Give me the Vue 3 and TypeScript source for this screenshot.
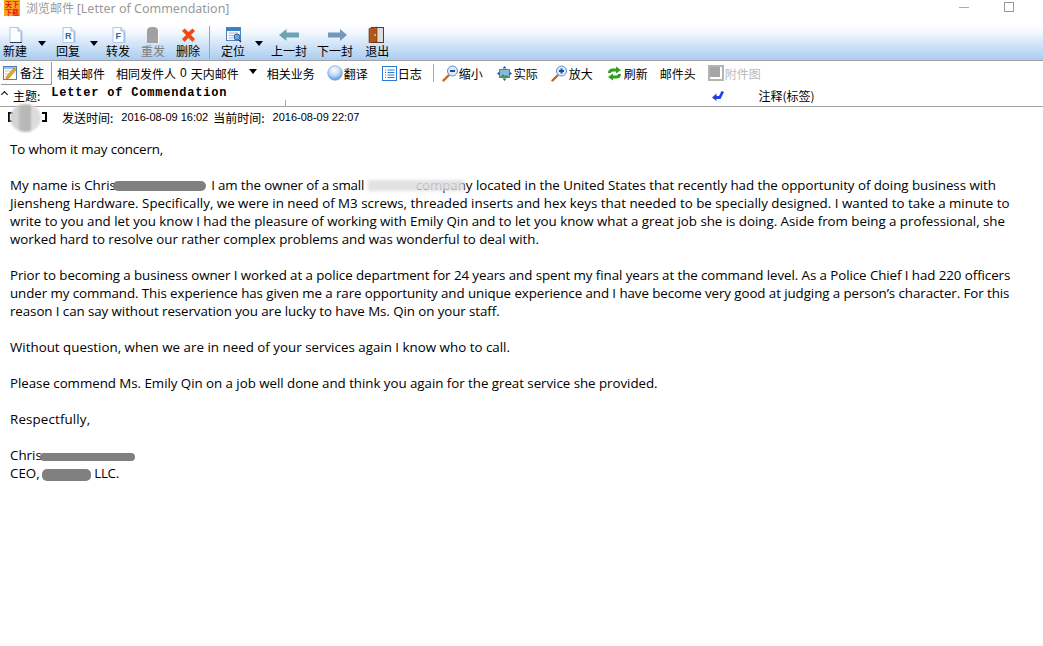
<script setup lang="ts">
// Mail viewer window: title bar, two toolbars, header rows and message body
interface TopItem { label?: string; icon?: string; ml: number; muted?: boolean }
interface Part { text?: string; smear?: number; haze?: number; cls?: string; ls?: number }

const topItems: TopItem[] = [
  { label: '新建', icon: 'new', ml: 3 },
  { icon: 'caret', ml: 11 },
  { label: '回复', icon: 'reply', ml: 10 },
  { icon: 'caret', ml: 10 },
  { label: '转发', icon: 'forward', ml: 8 },
  { label: '重发', icon: 'resend', ml: 11, muted: true },
  { label: '删除', icon: 'delete', ml: 11 },
  { icon: 'sep', ml: 9 },
  { label: '定位', icon: 'locate', ml: 11 },
  { icon: 'caret', ml: 10 },
  { label: '上一封', icon: 'prev', ml: 8 },
  { label: '下一封', icon: 'next', ml: 10 },
  { label: '退出', icon: 'exit', ml: 12 },
]

// ls: letter spacing per run, the source font is a little tighter or wider line by line
const lines: Part[][] = [
  [{ text: 'To whom it may concern,', ls: -0.13 }],
  [],
  [
    { text: 'My name is Chris' },
    { smear: 93, cls: 'smear-name' },
    { text: ' I am the owner of a small ', ls: -0.15 },
    { haze: 96 },
    { text: 'company located in the United States that recently had the opportunity of doing business with', ls: -0.04 },
  ],
  [{ text: 'Jiensheng Hardware. Specifically, we were in need of M3 screws, threaded inserts and hex keys that needed to be specially designed. I wanted to take a minute to', ls: 0.006 }],
  [{ text: 'write to you and let you know I had the pleasure of working with Emily Qin and to let you know what a great job she is doing. Aside from being a professional, she', ls: -0.025 }],
  [{ text: 'worked hard to resolve our rather complex problems and was wonderful to deal with.', ls: -0.03 }],
  [],
  [{ text: 'Prior to becoming a business owner I worked at a police department for 24 years and spent my final years at the command level. As a Police Chief I had 220 officers', ls: -0.073 }],
  [{ text: 'under my command. This experience has given me a rare opportunity and unique experience and I have become very good at judging a person’s character. For this', ls: -0.076 }],
  [{ text: 'reason I can say without reservation you are lucky to have Ms. Qin on your staff.', ls: -0.074 }],
  [],
  [{ text: 'Without question, when we are in need of your services again I know who to call.', ls: 0.012 }],
  [],
  [{ text: 'Please commend Ms. Emily Qin on a job well done and think you again for the great service she provided.', ls: -0.04 }],
  [],
  [{ text: 'Respectfully,', ls: 0.15 }],
  [],
  [{ text: 'Chris' }, { smear: 95, cls: 'smear-sign' }],
  [{ text: 'CEO, ' }, { smear: 49, cls: 'smear-ceo' }, { text: ' LLC.', ls: -0.3 }],
]
</script>

<template>
  <div class="window">
    <header class="titlebar">
      <span class="app-logo">
        <i>天下</i><i>下载</i>
      </span>
      <span class="title">浏览邮件 <span class="title-latin">[Letter of Commendation]</span></span>
      <span class="win-min"></span>
      <span class="win-max"></span>
    </header>

    <nav class="toolbar">
      <template v-for="(item, i) in topItems" :key="i">
        <span v-if="item.icon === 'caret'" class="caret" :style="{ marginLeft: item.ml + 'px' }"></span>
        <span v-else-if="item.icon === 'sep'" class="top-sep" :style="{ marginLeft: item.ml + 'px' }"></span>
        <div v-else class="tool" :class="{ muted: item.muted }" :style="{ marginLeft: item.ml + 'px' }">
          <svg class="tool-icon" viewBox="0 0 24 17" width="24" height="17">
            <template v-if="item.icon === 'new' || item.icon === 'reply' || item.icon === 'forward'">
              <path d="M7 1.500h8l4 3.500v11.500H7z" fill="#fbfdff" stroke="#b4c8e2" />
              <path d="M15 1.500V5h4" fill="#e4edf8" stroke="#9db6d6" />
              <path d="M7 16h12v1H7z" fill="#27374d" v-if="item.icon === 'new'" />
              <path d="M17.500 6h1.500v10h-1.500z" fill="#9dbce6" />
              <text v-if="item.icon === 'reply'" x="9" y="13" class="doc-letter">R</text>
              <text v-if="item.icon === 'forward'" x="9.500" y="13" class="doc-letter">F</text>
            </template>
            <template v-else-if="item.icon === 'resend'">
              <path d="M7 17V5q0-4 5-4h1q5 0 5 4v12z" fill="#fff" />
              <path d="M6 17V5q0-4 5-4h1q5 0 5 4v12z" fill="#a0a0a0" />
            </template>
            <path v-else-if="item.icon === 'delete'" d="M6 5l2.500-2.500L12.500 6l4-3.500L19 5l-4 4 4 4-2.500 3-4-4-4 4L6 13l4-4z" fill="#f04a12" />
            <template v-else-if="item.icon === 'locate'">
              <rect x="5.500" y="1.500" width="14" height="13" fill="#f2f6fc" stroke="#4d82bd" />
              <rect x="6" y="2" width="13" height="3" fill="#3d7fc4" />
              <path d="M8 7h9M8 9.500h5M8 12h4" stroke="#b3b9c2" />
              <circle cx="16" cy="11" r="3" fill="#6aa6dc" stroke="#2f639b" />
              <path d="M18 14l2 2" stroke="#333" stroke-width="1.200" />
            </template>
            <path v-else-if="item.icon === 'prev'" d="M2 9l7.500-6v3.500H22v5H9.500V15z" fill="#6ba3b5" />
            <path v-else-if="item.icon === 'next'" d="M24 9l-7-6v3.500H5v5h12V15z" fill="#7298b8" />
            <template v-else-if="item.icon === 'exit'">
              <rect x="6.500" y="1.500" width="12" height="15" fill="#dcdcdc" stroke="#5d3a1c" />
              <path d="M4 2.500l8-1.500v15l-8 1z" fill="#b4561c" stroke="#5d2f10" stroke-width=".6" />
              <rect x="9.500" y="8" width="1.400" height="2" fill="#f0d060" />
            </template>
          </svg>
          <span class="tool-label">{{ item.label }}</span>
        </div>
      </template>
    </nav>

    <nav class="subbar">
      <div class="note-btn">
        <svg viewBox="0 0 16 16" width="16" height="16">
          <rect x="1.500" y="1.500" width="13" height="13" fill="#fffdf0" stroke="#4f7fb5" />
          <rect x="2" y="2" width="12" height="2" fill="#9cc0e8" />
          <path d="M3 6h7M3 9h4M3 12h2" stroke="#b9c9dc" />
          <path d="M4 14l1-3 7-8 2 2-7 8z" fill="#eba628" stroke="#9a6510" stroke-width=".5" />
        </svg>
        <span>备注</span>
      </div>
      <span class="sub sub-related">相关邮件</span>
      <span class="sub sub-same">相同发件人</span>
      <span class="sub sub-zero">0</span>
      <span class="sub sub-days">天内邮件</span>
      <span class="caret sub-caret"></span>
      <span class="sub sub-biz">相关业务</span>

      <svg class="sub-globe" viewBox="0 0 16 16" width="16" height="16">
        <defs>
          <radialGradient id="globe" cx="45%" cy="30%" r="72%">
            <stop offset="0" stop-color="#ffffff" />
            <stop offset=".5" stop-color="#c4dbf5" />
            <stop offset="1" stop-color="#4f93dc" />
          </radialGradient>
        </defs>
        <circle cx="8" cy="8" r="7.300" fill="url(#globe)" stroke="#7aa9dc" stroke-width=".7" />
      </svg>
      <span class="sub sub-t1">翻译</span>

      <svg class="sub-log" viewBox="0 0 15 15" width="15" height="15">
        <rect x=".5" y=".5" width="14" height="14" fill="#fff" stroke="#2a7bd8" />
        <path d="M3 4h1M5.500 4h7M3 6.500h1M5.500 6.500h7M3 9h1M5.500 9h7M3 11.500h1M5.500 11.500h7" stroke="#2a7bd8" />
      </svg>
      <span class="sub sub-t1">日志</span>

      <span class="sub-sep"></span>

      <svg class="sub-zoomout" viewBox="0 0 17 17" width="17" height="17">
        <path d="M1.500 15.500l5-5" stroke="#b5682a" stroke-width="2.400" stroke-linecap="round" />
        <circle cx="10.500" cy="6" r="5" fill="#dceafa" stroke="#5a8fc4" />
        <path d="M8 6h5" stroke="#1c4f9c" stroke-width="2" />
      </svg>
      <span class="sub sub-t0">缩小</span>

      <svg class="sub-actual" viewBox="0 0 15 15" width="15" height="15">
        <rect x="2.500" y="3.500" width="10" height="8" fill="#8ab8dc" stroke="#5a7fa0" />
        <path d="M3 11l3-3 2 2 2-1 2 2z" fill="#3f9a3a" />
        <path d="M7.500 0l2 2.500h-4zM7.500 15l2-2.500h-4zM0 7.500l2.500-2v4zM15 7.500l-2.500-2v4z" fill="#1f5fa8" />
      </svg>
      <span class="sub sub-t2">实际</span>

      <svg class="sub-zoomin" viewBox="0 0 17 17" width="17" height="17">
        <path d="M1.500 15.500l5-5" stroke="#b5682a" stroke-width="2.400" stroke-linecap="round" />
        <circle cx="10.500" cy="6" r="5" fill="#dceafa" stroke="#5a8fc4" />
        <path d="M8 6h5M10.500 3.500v5" stroke="#1c4f9c" stroke-width="2" />
      </svg>
      <span class="sub sub-t1">放大</span>

      <svg class="sub-refresh" viewBox="0 0 15 15" width="15" height="15">
        <path d="M1 7q0-4.500 5-4.500h3V.5l5 3.500-5 3.500V5.500H6q-2 0-2.200 1.500z" fill="#2f9e1f" />
        <path d="M14 8q0 4.500-5 4.500H6v2L1 11l5-3.500v2h3q2 0 2.200-1.500z" fill="#2f9e1f" />
      </svg>
      <span class="sub sub-t2">刷新</span>

      <span class="sub sub-head">邮件头</span>

      <span class="sub-attach-icon"></span>
      <span class="sub sub-disabled">附件图</span>
    </nav>

    <div class="subject">
      <span class="chev"></span>
      <span class="subject-label">主题:</span>
      <span class="subject-text">Letter of Commendation</span>
      <svg class="reply-mark" viewBox="0 0 12 10" width="12" height="10">
        <path d="M0 6.500L4.500 2.500v2.500H7L9.500 0 12 1 8.500 8H4.500v2z" fill="#2540e0" />
      </svg>
      <span class="annot">注释(标签)</span>
      <span class="tick"></span>
    </div>

    <div class="meta">
      <span class="sender"><b class="br-l"></b><i class="avatar"></i><b class="br-r"></b></span>
      <span class="meta-key">发送时间:</span>
      <span class="meta-val">2016-08-09 16:02</span>
      <span class="meta-key meta-now">当前时间:</span>
      <span class="meta-val">2016-08-09 22:07</span>
    </div>

    <main class="body">
      <p v-for="(line, i) in lines" :key="i" class="line">
        <template v-for="(part, j) in line" :key="j">
          <i v-if="part.smear" class="smear" :class="part.cls" :style="{ width: part.smear + 'px' }"></i>
          <i v-else-if="part.haze" class="haze" :style="{ width: part.haze + 'px', marginRight: -part.haze / 2 + 'px' }"></i>
          <span v-else :style="{ letterSpacing: (part.ls ?? 0) + 'px' }">{{ part.text }}</span>
        </template>
      </p>
    </main>
  </div>
</template>

<style>
html, body { margin: 0; background: #fff; }
</style>

<style scoped>
.window {
  width: 1043px;
  height: 646px;
  overflow: hidden;
  background: #fff;
  font-family: "Noto Sans CJK SC", "Liberation Sans", sans-serif;
  font-size: 12px;
  color: #000;
}

/* title bar */
.titlebar {
  position: relative;
  display: flex;
  align-items: flex-start;
  height: 25px;
  padding-left: 4px;
}
.app-logo {
  display: flex;
  flex-direction: column;
  flex: none;
  width: 16px;
  height: 16px;
  background: #f9a51a;
  color: #e8141c;
  font-size: 7px;
  font-weight: 700;
  line-height: 8px;
  text-align: center;
}
.app-logo i { display: block; font-style: normal; white-space: nowrap; }
.title {
  margin-left: 6px;
  font-size: 12px;
  line-height: 15px;
  color: #999;
  white-space: nowrap;
}
.title-latin { font-family: "Noto Sans", sans-serif; font-size: 12.5px; }
.win-min {
  position: absolute;
  left: 959px;
  top: 7px;
  width: 10px;
  height: 1px;
  background: #aaa;
}
.win-max {
  position: absolute;
  left: 1004px;
  top: 2px;
  width: 8px;
  height: 8px;
  border: 1px solid #999;
}

/* main toolbar */
.toolbar {
  display: flex;
  align-items: flex-start;
  height: 35px;
  background: linear-gradient(#ffffff, #f3f8fd 20%, #a9ccf0);
  border-bottom: 1px solid #a0a0a0;
}
.tool {
  display: flex;
  flex-direction: column;
  align-items: center;
  height: 35px;
}
.tool-icon { flex: none; margin-top: 1px; }
.tool-label {
  line-height: 15px;
  white-space: nowrap;
}
.muted .tool-label { color: #7c7c7c; }
.doc-letter {
  font-family: "Liberation Sans", sans-serif;
  font-size: 9px;
  font-weight: 700;
  fill: #2d66b5;
}
.caret {
  flex: none;
  width: 0;
  height: 0;
  border-left: 4.5px solid transparent;
  border-right: 4.5px solid transparent;
  border-top: 5px solid #000;
  margin-top: 16px;
}
.top-sep {
  flex: none;
  width: 1px;
  height: 33px;
  margin-top: 1px;
  background: #8fa6bf;
}

/* second toolbar */
.subbar {
  display: flex;
  align-items: center;
  height: 24px;
  padding-left: 1px;
  box-sizing: border-box;
}
.subbar svg { flex: none; }
.note-btn {
  display: flex;
  align-items: center;
  flex: none;
  box-sizing: border-box;
  width: 51px;
  height: 23px;
  padding-left: 1px;
  gap: 2px;
  background: #fbfbfb;
  border-right: 1px solid #999;
  border-bottom: 1px solid #999;
}
.sub { white-space: nowrap; }
.sub-related { margin-left: 5px; }
.sub-same { margin-left: 11px; }
.sub-zero { margin-left: 4px; font-family: "Liberation Sans", sans-serif; }
.sub-days { margin-left: 4px; }
.sub-caret { margin: 0 0 4px 10px; }
.sub-biz { margin-left: 10px; }
.sub-t0 { margin-left: 0; }
.sub-t1 { margin-left: 1px; }
.sub-t2 { margin-left: 2px; }
.sub-globe { margin-left: 12px; }
.sub-log { margin-left: 14px; }
.sub-sep { flex: none; width: 1px; height: 18px; margin-left: 11px; background: #aaa; }
.sub-zoomout { margin-left: 8px; }
.sub-actual { margin-left: 14px; }
.sub-zoomin { margin-left: 13px; }
.sub-refresh { margin-left: 14px; }
.sub-head { margin-left: 12px; }
.sub-attach-icon {
  flex: none;
  box-sizing: border-box;
  width: 16px;
  height: 16px;
  margin-left: 12px;
  background: #a6a6a6;
  border: 2px solid #b4b4b4;
  box-shadow: inset -2px -2px 0 #fff;
}
.sub-disabled { margin-left: 1px; color: #bbb; }

/* subject row */
.subject {
  position: relative;
  display: flex;
  align-items: center;
  height: 22px;
  box-sizing: border-box;
  border-bottom: 1px solid #a0a0a0;
}
.chev {
  flex: none;
  width: 4px;
  height: 4px;
  margin: 0 0 2px 2px;
  border-left: 1px solid #000;
  border-top: 1px solid #000;
  transform: rotate(45deg);
}
.subject-label { margin-left: 6px; }
.subject-text {
  margin: -6px 0 0 11px;
  font-family: "Liberation Mono", monospace;
  font-size: 12px;
  font-weight: 700;
  letter-spacing: .8px;
  white-space: nowrap;
}
.reply-mark { flex: none; margin-left: 485px; }
.annot { margin-left: 34px; white-space: nowrap; }
.tick {
  position: absolute;
  left: 285px;
  bottom: 0;
  width: 1px;
  height: 6px;
  background: #aaa;
}

/* sender row */
.meta {
  display: flex;
  align-items: center;
  height: 20px;
}
.sender {
  position: relative;
  flex: none;
  display: flex;
  align-items: center;
  justify-content: space-between;
  box-sizing: border-box;
  width: 39px;
  height: 10px;
  margin-left: 8px;
}
.br-l, .br-r {
  box-sizing: border-box;
  width: 5px;
  height: 10px;
  border: 2px solid #000;
}
.br-l { border-right: 0; }
.br-r { border-left: 0; }
.avatar {
  position: absolute;
  left: 2px;
  top: -8px;
  width: 31px;
  height: 28px;
  border-radius: 50%;
  background: linear-gradient(90deg, #d4d4d4 28%, #bcbcbc 28%, #b4b4b4 68%, #dcdcdc 68%);
  filter: blur(.8px);
}
.meta-key { margin-left: 15px; white-space: nowrap; }
.meta-key.meta-now { margin-left: 5px; }
.meta-val {
  margin-left: 8px;
  font-family: "Liberation Sans", sans-serif;
  font-size: 11px;
  white-space: nowrap;
}

/* message */
.body {
  padding: 13px 0 0 10px;
  font-family: "Open Sans", "Noto Sans", sans-serif;
  font-size: 13.33px;
}
.line {
  height: 18px;
  margin: 0;
  line-height: 18px;
  white-space: pre;
}
.smear {
  display: inline-block;
  border-radius: 5px;
  background: #808080;
  filter: blur(.4px);
}
.smear-name { height: 10px; margin: 0 2px 0 -3px; vertical-align: -1px; }
.smear-sign { height: 8px; margin-left: -2px; vertical-align: -1px; }
.smear-ceo { height: 12px; margin-left: -1px; vertical-align: -3px; }
.haze {
  position: relative;
  z-index: 1;
  display: inline-block;
  height: 11px;
  vertical-align: -1px;
  background: rgba(222, 222, 222, .88);
  filter: blur(1.5px);
}
</style>
